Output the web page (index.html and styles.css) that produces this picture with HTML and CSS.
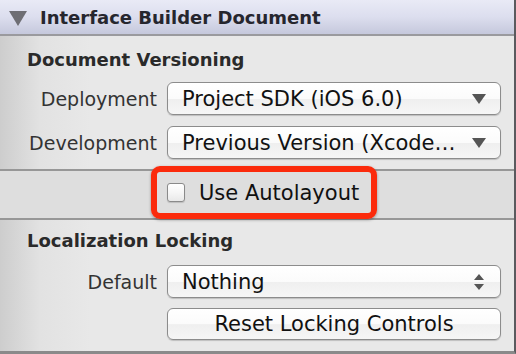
FILE: index.html
```html
<!DOCTYPE html>
<html>
<head>
<meta charset="utf-8">
<link rel="stylesheet" href="styles.css">
</head>
<body>
<div class="panel">
  <div class="header">
    <svg class="disclosure" width="18" height="16" viewBox="0 0 18 16"><path d="M0 1 H18 L9 16 Z" fill="#6e6e74"/></svg>
    <span class="header-title">Interface Builder Document</span>
  </div>
  <div class="section">
    <div class="section-title">Document Versioning</div>
    <div class="form">
      <div class="label">Deployment</div>
      <div class="popup"><span class="popup-text">Project SDK (iOS 6.0)</span>
        <svg class="arrow" width="14" height="10" viewBox="0 0 14 10"><path d="M0 0 H14 L7 10 Z" fill="#555"/></svg></div>
      <div class="label">Development</div>
      <div class="popup"><span class="popup-text">Previous Version (Xcode…</span>
        <svg class="arrow" width="14" height="10" viewBox="0 0 14 10"><path d="M0 0 H14 L7 10 Z" fill="#555"/></svg></div>
    </div>
  </div>
  <div class="band">
    <div class="highlight">
      <span class="checkbox"></span>
      <span class="check-label">Use Autolayout</span>
    </div>
  </div>
  <div class="section section-2">
    <div class="section-title">Localization Locking</div>
    <div class="form">
      <div class="label">Default</div>
      <div class="popup"><span class="popup-text">Nothing</span>
        <svg class="stepper" width="10" height="16" viewBox="0 0 10 16"><path d="M0 6 L5 0 L10 6 Z M0 10 L10 10 L5 16 Z" fill="#555"/></svg></div>
      <div></div>
      <div class="button">Reset Locking Controls</div>
    </div>
  </div>
</div>
</body>
</html>
```
FILE: styles.css
```css
html, body {
  margin: 0;
  padding: 0;
}
body {
  width: 516px;
  height: 354px;
  overflow: hidden;
  font-family: "DejaVu Sans", "Noto Sans", sans-serif;
}
.panel {
  box-sizing: border-box;
  width: 516px;
  height: 354px;
  border-right: 2px solid #5a5a5e;
  border-bottom: 3px solid #8a8a8a;
  background: linear-gradient(to right, #cdcdcd 0px, #e2e2e2 40px, #e8e8e8 90px, #e8e8e8 100%);
  display: flex;
  flex-direction: column;
}
.header {
  height: 34px;
  border-top: 1px solid #6a6a70;
  border-bottom: 2px solid #9a9a9e;
  box-sizing: content-box;
  margin-top: -1px;
  background: linear-gradient(to bottom, #e9eaf6 0%, #dcdeee 50%, #c5c8dc 100%);
  display: flex;
  align-items: center;
  padding-left: 9px;
}
.disclosure {
  margin-right: 13px;
  margin-top: 1px;
}
.header-title {
  font-weight: bold;
  font-size: 18px;
  color: #26262e;
}
.section {
  padding-left: 27px;
  padding-top: 13px;
}
.section-title {
  font-weight: bold;
  font-size: 18px;
  color: #2a2a2a;
  height: 22px;
  line-height: 22px;
}
.form {
  display: grid;
  grid-template-columns: 130px 334px;
  column-gap: 10px;
  row-gap: 11px;
  margin-top: 11px;
  align-items: center;
}
.label {
  text-align: right;
  font-size: 19px;
  color: #333;
  white-space: nowrap;
}
.popup, .button {
  box-sizing: border-box;
  height: 33px;
  border: 1px solid #8c8c8c;
  border-radius: 6px;
  background: linear-gradient(to bottom, #ffffff 0%, #fbfbfb 50%, #efefef 52%, #f6f6f6 100%);
  box-shadow: 0 1px 1px rgba(0,0,0,0.18);
  display: flex;
  align-items: center;
  padding-left: 14px;
  padding-right: 14px;
  font-size: 21px;
  color: #111;
}
.popup-text {
  flex: 1;
  white-space: nowrap;
  overflow: hidden;
}
.arrow {
  margin-left: 4px;
}
.stepper {
  margin-right: 2px;
}
.button {
  justify-content: center;
  height: 32px;
  white-space: nowrap;
}
.band {
  margin-top: 10px;
  height: 47px;
  border-top: 2px solid #979797;
  border-bottom: 2px solid #979797;
  background: #dedede;
  position: relative;
}
.highlight {
  position: absolute;
  left: 151px;
  top: -5px;
  width: 226px;
  height: 53px;
  box-sizing: border-box;
  border: 6px solid #fb2b0c;
  border-radius: 9px;
  box-shadow: 0 1px 3px rgba(0,0,0,0.35);
  display: flex;
  align-items: center;
  padding-left: 10px;
}
.checkbox {
  width: 18px;
  height: 19px;
  box-sizing: border-box;
  border: 1px solid #8a8a8a;
  border-radius: 3px;
  background: linear-gradient(to bottom, #ffffff 0%, #f6f6f6 50%, #e9e9e9 100%);
  box-shadow: 0 1px 1px rgba(0,0,0,0.15);
  margin-right: 14px;
}
.check-label {
  font-size: 21px;
  color: #111;
  white-space: nowrap;
}
.section-2 {
  padding-top: 10px;
}
.section-2 .form {
  margin-top: 13px;
  row-gap: 10px;
}
```
